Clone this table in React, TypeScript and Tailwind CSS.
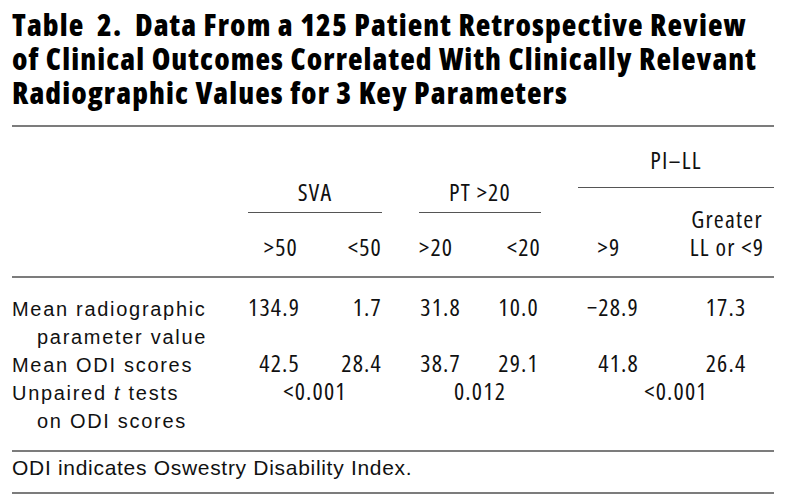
const narrow = "font-['Open_Sans',sans-serif] [font-stretch:75%] tracking-[1.2px]";
const titleFont = "font-['Open_Sans',sans-serif] [font-stretch:87.5%]";
const wide = "font-['Liberation_Sans',Arial,sans-serif]";

const rows = [
  {
    label: ["Mean radiographic", "parameter value"],
    values: ["134.9", "1.7", "31.8", "10.0", "\u221228.9", "17.3"],
  },
  {
    label: ["Mean ODI scores"],
    values: ["42.5", "28.4", "38.7", "29.1", "41.8", "26.4"],
  },
];

function Label({ lines }: { lines: React.ReactNode[] }) {
  return (
    <div className={`${wide} col-start-1 text-[20px] leading-[28px] tracking-[1.7px]`}>
      {lines.map((line, i) => (
        <div key={i} className={i > 0 ? "pl-[25px]" : ""}>
          {line}
        </div>
      ))}
    </div>
  );
}

export default function App() {
  return (
    <div className="h-[499px] w-[786px] bg-white px-3 text-[#111]">
      <h1 className={`${titleFont} pt-[8px] text-[30px] font-extrabold leading-[34px] tracking-[1.1px] text-black`}>
        <span className="block whitespace-nowrap">Table&nbsp; 2.&nbsp; Data From a 125 Patient Retrospective Review</span>
        <span className="block whitespace-nowrap">of Clinical Outcomes Correlated With Clinically Relevant</span>
        <span className="block whitespace-nowrap">Radiographic Values for 3 Key Parameters</span>
      </h1>
      <div className="mt-[15px] h-[2px] bg-[#7c7c7c]" />

      <div className={`${narrow} grid grid-cols-[236px_52px_82px_37px_42px_80px_37px_62px_134px] grid-rows-[61px_25px_63px] text-[24px] leading-[28px]`}>
        <div className="col-span-2 col-start-2 row-span-2 row-start-1 flex items-end justify-center border-b border-[#555] pb-[6px]">
          SVA
        </div>
        <div className="col-span-2 col-start-5 row-span-2 row-start-1 flex items-end justify-center border-b border-[#555] pb-[6px]">
          PT &gt;20
        </div>
        <div className="col-span-2 col-start-8 row-start-1 flex items-end justify-center border-b border-[#555] pb-[13px]">
          PI–LL
        </div>
        <div className="col-start-2 row-start-3 flex items-end justify-end pb-[15px] pr-[2px]">&gt;50</div>
        <div className="col-start-3 row-start-3 flex items-end justify-end pb-[15px]">&lt;50</div>
        <div className="col-start-5 row-start-3 flex items-end justify-start pb-[15px]">&gt;20</div>
        <div className="col-start-6 row-start-3 flex items-end justify-end pb-[15px]">&lt;20</div>
        <div className="col-start-8 row-start-3 flex items-end justify-center pb-[15px]">&gt;9</div>
        <div className="col-start-9 row-span-2 row-start-2 flex flex-col items-center justify-end pb-[15px] pl-[40px] text-center">
          <span>Greater</span>
          <span>LL or &lt;9</span>
        </div>
      </div>
      <div className="h-[2px] bg-[#7c7c7c]" />

      <div className={`${narrow} grid grid-cols-[236px_52px_82px_37px_42px_80px_37px_62px_134px] items-baseline pb-[15px] pt-[17px] text-[24px] leading-[24px]`}>
        {rows.map((row) => (
          <>
            <Label key={row.label[0]} lines={row.label} />
            <div className="col-start-2 text-right">{row.values[0]}</div>
            <div className="col-start-3 text-right">{row.values[1]}</div>
            <div className="col-start-5 text-right">{row.values[2]}</div>
            <div className="col-start-6 pr-[2px] text-right">{row.values[3]}</div>
            <div className="col-start-8 pr-[1px] text-right">{row.values[4]}</div>
            <div className="col-start-9 pl-[40px] pr-[2px] text-center">{row.values[5]}</div>
          </>
        ))}
        <Label
          lines={[
            <>
              Unpaired <i>t</i> tests
            </>,
            "on ODI scores",
          ]}
        />
        <div className="col-span-2 col-start-2 text-center">&lt;0.001</div>
        <div className="col-span-2 col-start-5 text-center">0.012</div>
        <div className="col-span-2 col-start-8 text-center">&lt;0.001</div>
      </div>

      <div className="h-[2px] bg-[#7c7c7c]" />
      <p className={`${wide} pb-[10px] pt-[2px] text-[21px] leading-[28px] tracking-[0.7px]`}>
        ODI indicates Oswestry Disability Index.
      </p>
      <div className="h-[2px] bg-[#7c7c7c]" />
    </div>
  );
}
